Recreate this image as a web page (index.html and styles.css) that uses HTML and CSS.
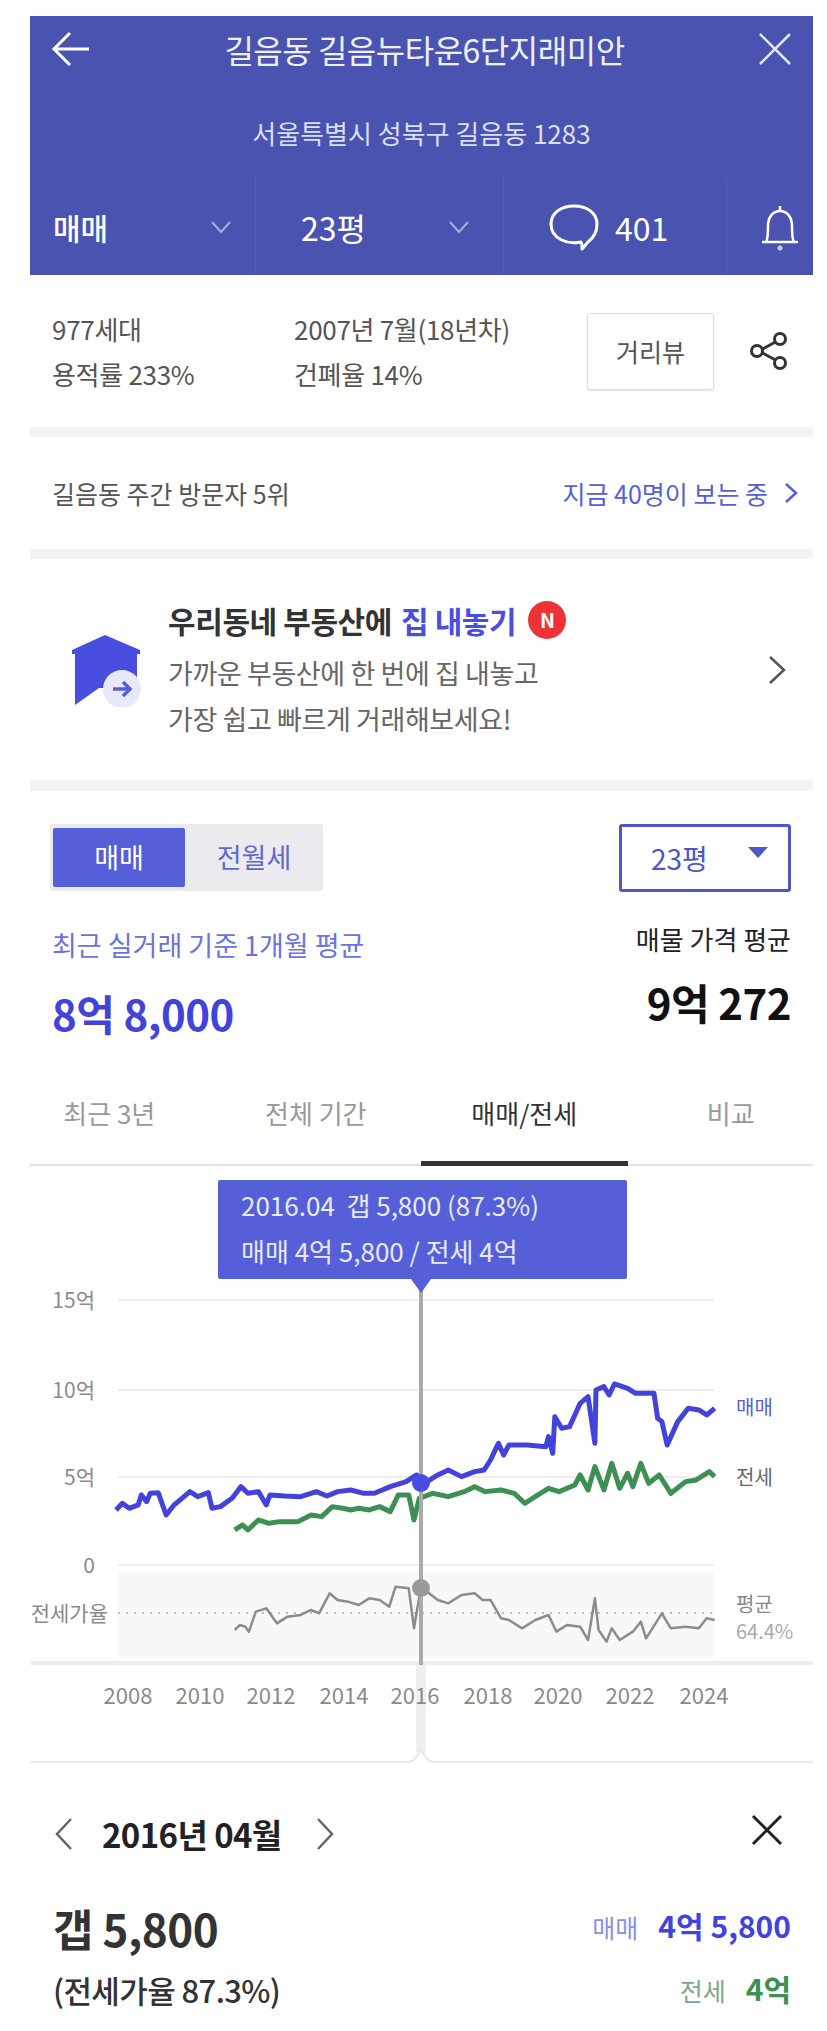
FILE: index.html
```html
<!DOCTYPE html>
<html>
<head>
    <title>길음뉴타운6단지래미안</title>
    <link rel="stylesheet" href="styles.css">
</head>
<body>
    <div class="page">
        <header class="top">
            <div class="top-title">
                <svg class="top-icon" width="40" height="38" viewBox="0 0 40 38"><path d="M38 19H3M19 3L3 19l16 16" fill="none" stroke="#fff" stroke-width="3"/></svg>
                <h1>길음동 길음뉴타운6단지래미안</h1>
                <svg class="top-icon" width="34" height="34" viewBox="0 0 34 34"><path d="M2 2l30 30M32 2L2 32" fill="none" stroke="#e4e6f6" stroke-width="2.5"/></svg>
            </div>
            <div class="top-address">서울특별시 성북구 길음동 1283</div>
            <div class="top-menu">
                <div class="menu-cell menu-deal">
                    <b>매매</b>
                    <svg width="22" height="14" viewBox="0 0 22 14"><path d="M2 2l9 10 9-10" fill="none" stroke="#a9aee0" stroke-width="2"/></svg>
                </div>
                <div class="menu-cell menu-size">
                    <span>23평</span>
                    <svg width="22" height="14" viewBox="0 0 22 14"><path d="M2 2l9 10 9-10" fill="none" stroke="#a9aee0" stroke-width="2"/></svg>
                </div>
                <div class="menu-cell menu-talk">
                    <svg width="52" height="48" viewBox="0 0 52 48"><path d="M34 46c0-3 0-6-1-7C20 42 3 36 3 21 3 10 13 3 26 3s23 7 23 18c0 9-5 15-9 18-2 2-4 5-6 7z" fill="none" stroke="#fff" stroke-width="3" stroke-linejoin="round"/></svg>
                    <span>401</span>
                </div>
                <div class="menu-cell menu-bell">
                    <svg width="40" height="48" viewBox="0 0 40 48"><path d="M2 39h36M6 39c2-3 2-8 2-16 0-9 5-15 12-15s12 6 12 15c0 8 0 13 2 16M20 8V3" fill="none" stroke="#fff" stroke-width="2.5"/><circle cx="20" cy="45" r="2.5" fill="#c9cdf0"/></svg>
                </div>
            </div>
        </header>

        <section class="info">
            <ul class="info-col info-col-first">
                <li>977세대</li>
                <li>용적률 233%</li>
            </ul>
            <ul class="info-col info-col-second">
                <li>2007년 7월(18년차)</li>
                <li>건폐율 14%</li>
            </ul>
            <button class="street-btn">거리뷰</button>
            <svg class="share" width="40" height="40" viewBox="0 0 40 40"><path d="M30 9L10 20l20 11" fill="none" stroke="#333" stroke-width="3"/><circle cx="31" cy="8" r="5.5" fill="#fff" stroke="#333" stroke-width="3"/><circle cx="8" cy="20" r="5.5" fill="#fff" stroke="#333" stroke-width="3"/><circle cx="31" cy="32" r="5.5" fill="#fff" stroke="#333" stroke-width="3"/></svg>
        </section>

        <section class="visitors">
            <span>길음동 주간 방문자 5위</span>
            <a class="visitors-now">지금 40명이 보는 중
                <svg width="16" height="24" viewBox="0 0 16 24"><path d="M3 3l10 9-10 9" fill="none" stroke="#5560d8" stroke-width="2.5"/></svg>
            </a>
        </section>

        <section class="banner">
            <svg class="banner-icon" width="70" height="74" viewBox="0 0 70 74">
                <path d="M34 2L1 17v4h3v51l24-17h38V21h3v-4z" fill="#4a4ee0"/>
                <circle cx="51" cy="56" r="19" fill="#e8e8fa"/>
                <path d="M42 56h17M52 49l7 7-7 7" fill="none" stroke="#5560d8" stroke-width="3.5"/>
            </svg>
            <div class="banner-text">
                <div class="banner-title">우리동네 부동산에 <em>집 내놓기</em><span class="badge-new">N</span></div>
                <p>가까운 부동산에 한 번에 집 내놓고<br>가장 쉽고 빠르게 거래해보세요!</p>
            </div>
            <svg class="banner-arrow" width="20" height="32" viewBox="0 0 20 32"><path d="M3 3l14 13L3 29" fill="none" stroke="#555" stroke-width="2.5"/></svg>
        </section>

        <section class="price">
            <div class="price-controls">
                <div class="toggle">
                    <span class="toggle-on">매매</span>
                    <span class="toggle-off">전월세</span>
                </div>
                <div class="size-select">23평<i class="caret"></i></div>
            </div>
            <div class="price-figures">
                <div>
                    <div class="price-label">최근 실거래 기준 1개월 평균</div>
                    <div class="price-main">8억 8,000</div>
                </div>
                <div class="price-right">
                    <div class="price-label-dark">매물 가격 평균</div>
                    <div class="price-ask">9억 272</div>
                </div>
            </div>
        </section>

        <nav class="tabs">
            <a>최근 3년</a>
            <a>전체 기간</a>
            <a class="tab-on">매매/전세</a>
            <a>비교</a>
        </nav>

        <section class="chart">
            <svg class="chart-svg" width="783" height="600" viewBox="30 1156 783 600">
                <g class="grid">
                    <path d="M118 1290H714M118 1380H714M118 1467H714M118 1555H714"/>
                </g>
                <rect x="118" y="1562" width="596" height="85" fill="#f8f8f8"/>
                <path d="M118 1603H718" stroke="#bbb" stroke-width="2" stroke-dasharray="2 6" fill="none"/>

                <g class="axis-y">
                    <text x="95" y="1298">15억</text>
                    <text x="95" y="1388">10억</text>
                    <text x="95" y="1475">5억</text>
                    <text x="95" y="1563">0</text>
                    <text x="108" y="1611">전세가율</text>
                </g>

                <g transform="translate(0,1170) scale(.5274,.3333)">
                    <polyline class="line line-jeonse" points="445,1050 460,1035 470,1050 490,1020 510,1030 530,1025 565,1025 590,1005 610,1010 630,980 650,985 665,990 680,985 700,990 720,980 740,995 755,945 775,945 785,1020 795,955 820,940 850,950 880,935 900,920 920,935 950,930 975,940 995,970 1020,945 1040,925 1060,935 1090,915 1100,885 1115,930 1128,860 1145,930 1160,850 1175,925 1190,880 1200,920 1215,850 1230,910 1250,885 1272,940 1300,905 1320,900 1345,875 1355,890"/>
                    <polyline class="line line-deal" points="220,990 232,970 245,985 262,975 268,945 278,965 285,940 300,938 315,1005 330,975 345,955 360,935 375,950 395,938 402,985 418,980 440,955 457,920 470,940 490,935 505,975 512,945 540,948 570,950 600,935 620,948 640,935 665,930 690,940 710,940 740,920 770,905 790,885 810,905 830,885 850,870 875,890 900,875 918,870 930,840 945,790 955,825 965,795 1000,795 1035,800 1040,770 1048,820 1052,710 1065,745 1080,740 1100,670 1115,650 1128,790 1130,630 1145,620 1155,645 1165,612 1190,625 1205,640 1240,640 1247,715 1255,725 1265,795 1285,725 1305,685 1325,690 1340,705 1355,685"/>
                </g>
                <g transform="translate(0,1540) scale(.5274,.3333)">
                    <polyline class="line line-ratio" points="445,240 455,225 465,230 472,245 485,185 505,175 525,220 545,200 570,195 590,180 605,190 625,130 640,150 660,155 680,165 700,145 720,150 738,170 750,110 775,115 785,235 795,140 810,125 830,150 850,160 875,135 900,130 915,150 930,150 950,205 965,210 990,235 1015,210 1040,195 1055,245 1075,225 1100,230 1115,270 1128,145 1135,240 1150,275 1160,235 1175,270 1200,245 1215,215 1225,265 1255,190 1272,235 1300,230 1325,235 1340,205 1355,210"/>
                </g>

                <path d="M421 1655V1742" stroke="#efefef" stroke-width="10"/>
                <path d="M30 1653H813" stroke="#eee" stroke-width="4"/>
                <path d="M421 1280V1655" stroke="#aaa" stroke-width="4"/>
                <circle cx="421" cy="1473" r="9" fill="#4a4ee0"/>
                <circle cx="421" cy="1578" r="9" fill="#999"/>
                <path d="M30 1752H408c6 0 9-6 13-12 4 6 7 12 13 12H813" fill="none" stroke="#eaeaea" stroke-width="2.5"/>

                <g class="legend">
                    <text x="736" y="1405" fill="#5560d8">매매</text>
                    <text x="736" y="1475" fill="#666">전세</text>
                    <text x="736" y="1602" fill="#888">평균</text>
                    <text x="736" y="1629" fill="#aaa">64.4%</text>
                </g>

                <g class="axis-x">
                    <text x="128" y="1694">2008</text>
                    <text x="200" y="1694">2010</text>
                    <text x="271" y="1694">2012</text>
                    <text x="344" y="1694">2014</text>
                    <text x="415" y="1694">2016</text>
                    <text x="488" y="1694">2018</text>
                    <text x="558" y="1694">2020</text>
                    <text x="630" y="1694">2022</text>
                    <text x="704" y="1694">2024</text>
                </g>
            </svg>
            <div class="chart-tip">
                <div>2016.04&nbsp; 갭 5,800 (87.3%)</div>
                <div>매매 4억 5,800 / 전세 4억</div>
            </div>
        </section>

        <section class="detail">
            <div class="detail-head">
                <svg width="22" height="36" viewBox="0 0 22 36"><path d="M18 3L4 18l14 15" fill="none" stroke="#666" stroke-width="2.5"/></svg>
                <strong>2016년 04월</strong>
                <svg width="22" height="36" viewBox="0 0 22 36"><path d="M4 3l14 15L4 33" fill="none" stroke="#666" stroke-width="2.5"/></svg>
                <svg class="detail-close" width="34" height="34" viewBox="0 0 34 34"><path d="M3 3l28 28M31 3L3 31" fill="none" stroke="#222" stroke-width="3"/></svg>
            </div>
            <div class="detail-body">
                <div>
                    <div class="detail-gap">갭 5,800</div>
                    <div class="detail-ratio">(전세가율 87.3%)</div>
                </div>
                <div class="detail-prices">
                    <div class="detail-deal"><span>매매</span><b>4억 5,800</b></div>
                    <div class="detail-jeonse"><span>전세</span><b>4억</b></div>
                </div>
            </div>
        </section>
    </div>
</body>
</html>
```

FILE: styles.css
```css
body {
    font-family: "Noto Sans CJK KR", "Noto Sans", sans-serif;
    margin: 0;
    padding: 0;
    background-color: #ffffff;
}

.page {
    width: 783px;
    height: 2015px;
    margin: 16px 0 0 30px;
    overflow: hidden;
    color: #333;
}

/* header */
.top {
    height: 259px;
    background-color: #4b53b1;
    color: #ffffff;
}

.top-title {
    display: flex;
    align-items: center;
    justify-content: space-between;
    height: 66px;
    padding: 0 21px 0 21px;
}

.top-title h1 {
    margin: 0;
    font-size: 32px;
    font-weight: 400;
    letter-spacing: -0.5px;
    color: #eef0fa;
}

.top-address {
    height: 96px;
    padding-top: 6px;
    box-sizing: border-box;
    text-align: center;
    font-size: 26px;
    line-height: 90px;
    color: #dcdff3;
}

.top-menu {
    display: flex;
    height: 97px;
}

.menu-cell {
    display: flex;
    align-items: center;
    box-sizing: border-box;
    border-left: 1px solid #555dba;
    font-size: 32px;
}

.menu-deal {
    width: 225px;
    padding: 0 23px;
    justify-content: space-between;
    border-left: none;
}

.menu-deal b {
    font-weight: 500;
    font-size: 30px;
}

.menu-size {
    width: 248px;
    padding: 0 33px 0 45px;
    justify-content: space-between;
}

.menu-talk {
    width: 223px;
    padding-left: 44px;
    gap: 15px;
}

.menu-bell {
    flex: 1;
    padding-left: 33px;
}

/* complex info */
.info {
    display: flex;
    align-items: center;
    height: 152px;
    padding: 0 22px;
    box-sizing: border-box;
    border-bottom: 0;
    font-size: 26px;
    color: #555;
}

.info-col {
    list-style-type: none;
    margin: 0;
    padding: 0;
    line-height: 45px;
    letter-spacing: -0.3px;
}

.info-col-first {
    width: 242px;
}

.info-col-second {
    width: 293px;
}

.street-btn {
    width: 127px;
    height: 77px;
    padding: 0;
    background-color: #ffffff;
    border: 1px solid #ddd;
    border-radius: 3px;
    box-shadow: 0 1px 2px rgba(0, 0, 0, 0.1);
    font-family: inherit;
    font-size: 25px;
    color: #555;
}

.share {
    margin-left: 35px;
}

.visitors {
    display: flex;
    align-items: center;
    justify-content: space-between;
    height: 112px;
    padding: 0 14px 0 22px;
    border-top: 10px solid #f3f3f3;
    font-size: 25px;
    color: #555;
}

.visitors-now {
    display: flex;
    align-items: center;
    gap: 15px;
    color: #5560d8;
}

/* banner */
.banner {
    display: flex;
    align-items: center;
    height: 221px;
    padding: 0 26px 0 41px;
    border-top: 10px solid #f3f3f3;
    border-bottom: 11px solid #f3f3f3;
}

.banner-text {
    flex: 1;
    margin-left: 27px;
}

.banner-title {
    display: flex;
    align-items: center;
    font-size: 30px;
    font-weight: 700;
    line-height: 44px;
    letter-spacing: -0.4px;
    color: #333;
}

.banner-title em {
    margin-left: 9px;
    font-style: normal;
    color: #4a4ee0;
}

.badge-new {
    width: 38px;
    height: 38px;
    margin-left: 12px;
    background-color: #ee3338;
    border-radius: 50%;
    color: #ffffff;
    font-size: 20px;
    line-height: 38px;
    text-align: center;
}

.banner-text p {
    margin: 8px 0 0 0;
    font-size: 27px;
    line-height: 46px;
    letter-spacing: -0.4px;
    color: #666;
}

/* price */
.price {
    padding: 33px 22px 0 22px;
}

.price-controls {
    display: flex;
    justify-content: space-between;
}

.toggle {
    display: flex;
    width: 273px;
    height: 67px;
    box-sizing: border-box;
    margin-left: -2px;
    padding: 4px 0 4px 3px;
    background-color: #ebebef;
    border-radius: 3px;
    font-size: 27px;
    line-height: 57px;
    text-align: center;
}

.toggle-on {
    width: 132px;
    background-color: #5560d8;
    border-radius: 2px;
    color: #ffffff;
}

.toggle-off {
    flex: 1;
    color: #5f68cf;
}

.size-select {
    position: relative;
    width: 172px;
    height: 68px;
    box-sizing: border-box;
    padding-left: 29px;
    border: 3px solid #4e56c8;
    border-radius: 3px;
    font-size: 28px;
    line-height: 62px;
    color: #4e56c8;
}

.caret {
    position: absolute;
    top: 20px;
    right: 20px;
    border-left: 10px solid transparent;
    border-right: 10px solid transparent;
    border-top: 11px solid #4e56c8;
}

.price-figures {
    display: flex;
    justify-content: space-between;
    margin-top: 29px;
}

.price-label {
    font-size: 27px;
    line-height: 48px;
    color: #6a73e2;
}

.price-main {
    margin-top: 14px;
    font-size: 42px;
    font-weight: 700;
    line-height: 60px;
    letter-spacing: -0.5px;
    color: #4343dc;
}

.price-right {
    text-align: right;
}

.price-label-dark {
    margin-top: -4px;
    font-size: 26px;
    line-height: 44px;
    color: #222;
}

.price-ask {
    margin-top: 11px;
    font-size: 42px;
    font-weight: 700;
    line-height: 60px;
    letter-spacing: -0.5px;
    color: #111;
}

/* tabs */
.tabs {
    display: flex;
    height: 102px;
    margin-top: 21px;
    margin-left: -24px;
    width: 828px;
    font-size: 26px;
    color: #999;
    box-shadow: inset 0 -2px 0 #e3e3e3;
    clip-path: inset(0 0 0 24px);
}

.tabs a {
    width: 207px;
    box-sizing: border-box;
    padding-top: 30px;
    text-align: center;
}

.tabs .tab-on {
    color: #333;
    border-bottom: 5px solid #333;
    margin-left: 2px;
}

/* chart */
.chart {
    position: relative;
    height: 600px;
}

.chart-svg {
    display: block;
}

.grid path {
    stroke: #eeeeee;
    stroke-width: 2;
    fill: none;
}

.axis-y text {
    font-size: 21px;
    fill: #8a8a8a;
    text-anchor: end;
}

.axis-x text {
    font-size: 22px;
    fill: #8a8a8a;
    text-anchor: middle;
}

.legend text {
    font-size: 20px;
}

.line {
    fill: none;
    stroke-linejoin: round;
    vector-effect: non-scaling-stroke;
}

.line-deal {
    stroke: #4343dc;
    stroke-width: 5;
}

.line-jeonse {
    stroke: #3d8f53;
    stroke-width: 5;
}

.line-ratio {
    stroke: #8c8c8c;
    stroke-width: 2.5;
}

.chart-tip {
    position: absolute;
    top: 14px;
    left: 188px;
    width: 409px;
    height: 99px;
    box-sizing: border-box;
    padding: 2px 0 0 23px;
    background-color: #5560d8;
    border-radius: 2px;
    font-size: 26px;
    line-height: 46px;
    color: #e8eafa;
}

.chart-tip::after {
    content: "";
    position: absolute;
    left: 193px;
    top: 99px;
    border-left: 10px solid transparent;
    border-right: 10px solid transparent;
    border-top: 14px solid #5560d8;
}

/* selected month */
.detail {
    padding: 48px 22px 0 23px;
}

.detail-head {
    display: flex;
    align-items: center;
    height: 40px;
    font-size: 33px;
    color: #222;
}

.detail-head strong {
    margin: 0 32px 0 27px;
    letter-spacing: -0.6px;
}

.detail-close {
    margin-left: auto;
    margin-right: 7px;
    margin-top: -8px;
}

.detail-body {
    display: flex;
    justify-content: space-between;
    margin-top: 44px;
}

.detail-gap {
    font-size: 44px;
    font-weight: 700;
    line-height: 60px;
    letter-spacing: -0.5px;
    color: #333;
}

.detail-ratio {
    margin-top: 7px;
    font-size: 31px;
    font-weight: 500;
    line-height: 50px;
    letter-spacing: -0.6px;
    color: #333;
}

.detail-prices {
    text-align: right;
    font-size: 30px;
}

.detail-prices span {
    margin-right: 20px;
    font-size: 25px;
}

.detail-deal {
    line-height: 54px;
    color: #4343dc;
}

.detail-deal span {
    color: #8a90e8;
}

.detail-jeonse {
    margin-top: 7px;
    line-height: 54px;
    color: #3d8f53;
}

.detail-jeonse span {
    color: #7aa98a;
}
```
